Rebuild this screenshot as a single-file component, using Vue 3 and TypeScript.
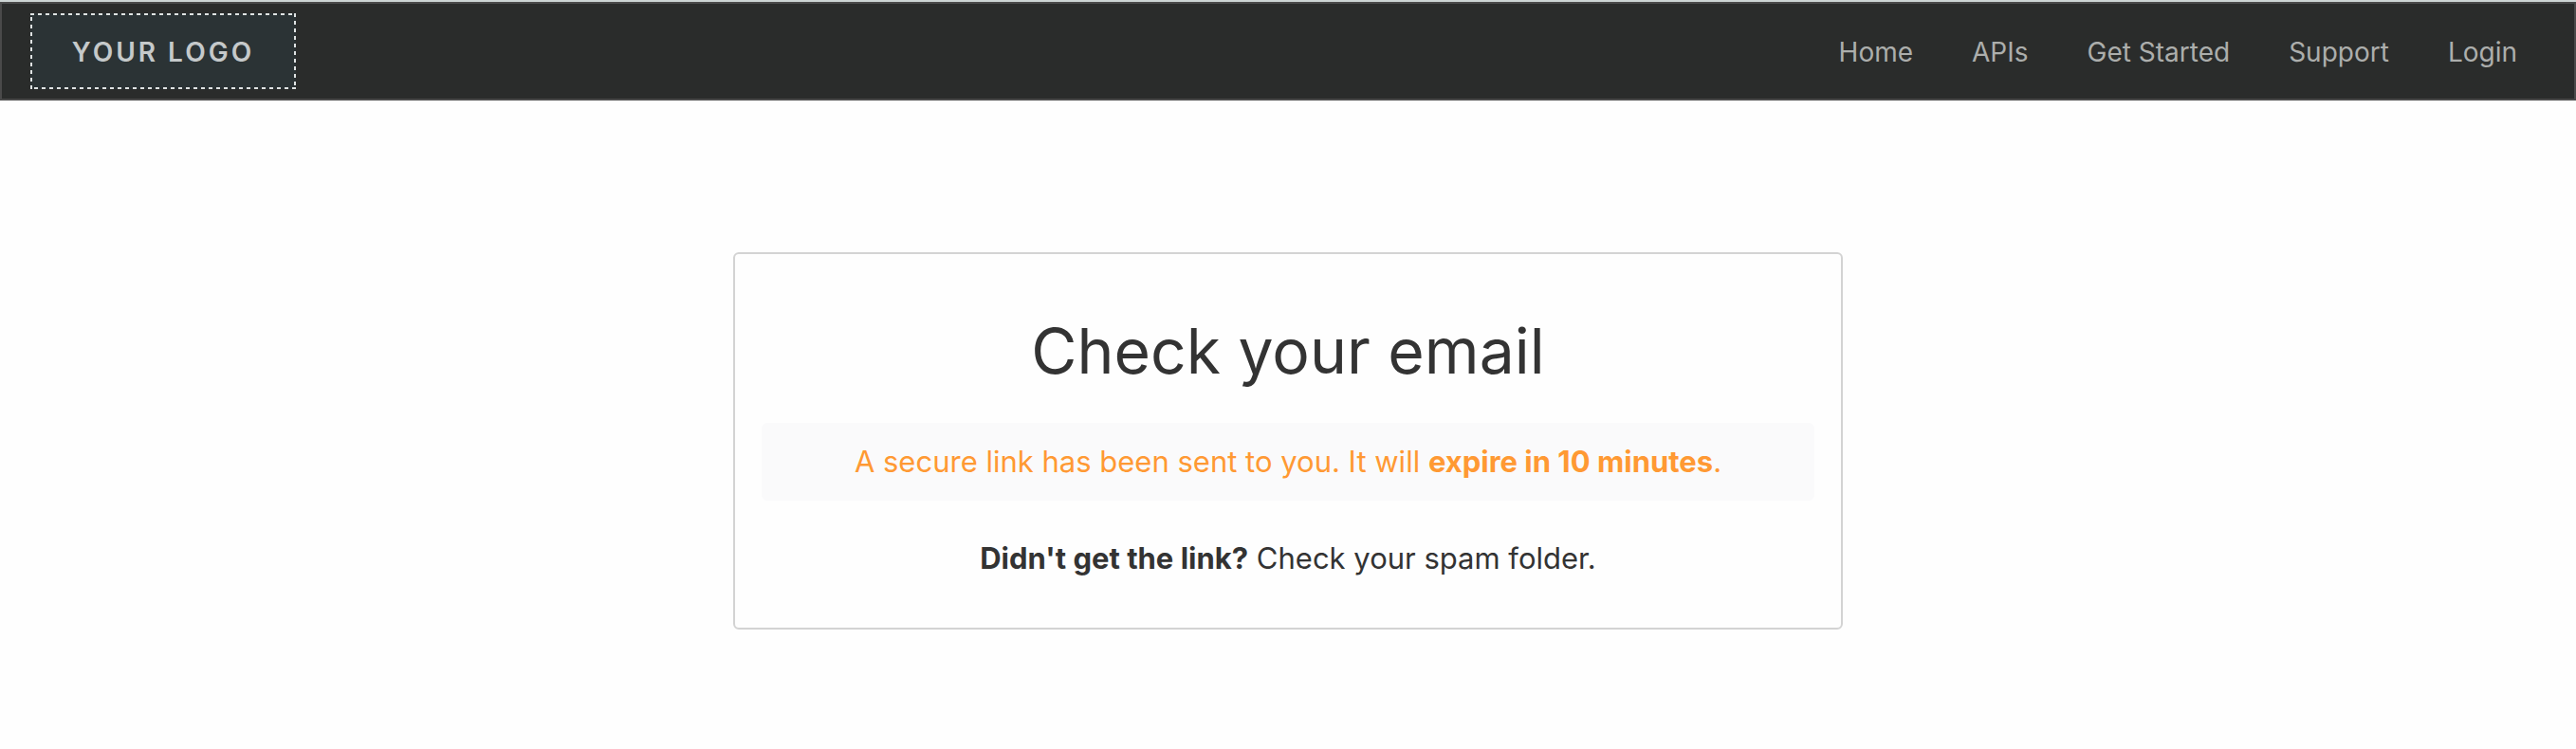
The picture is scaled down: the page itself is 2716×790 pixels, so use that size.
<script setup lang="ts">
interface NavLink {
  label: string
  href: string
}

const links: NavLink[] = [
  { label: 'Home', href: '#home' },
  { label: 'APIs', href: '#apis' },
  { label: 'Get Started', href: '#get-started' },
  { label: 'Support', href: '#support' },
  { label: 'Login', href: '#login' },
]
</script>

<template>
  <div class="page">
    <header class="topbar">
      <a class="logo" href="#home">
        <svg class="logo-frame" aria-hidden="true">
          <rect class="logo-outline" width="100%" height="100%" />
        </svg>
        <span class="logo-text">YOUR LOGO</span>
      </a>
      <nav class="nav" aria-label="Main">
        <a v-for="link in links" :key="link.label" class="nav-link" :href="link.href">{{ link.label }}</a>
      </nav>
    </header>

    <main class="content">
      <section class="card">
        <h1 class="title">Check your email</h1>
        <p class="notice">A secure link has been sent to you. It will <strong>expire in 10 minutes</strong>.</p>
        <p class="hint"><strong>Didn't get the link?</strong> Check your spam folder.</p>
      </section>
    </main>
  </div>
</template>

<style>
body {
  margin: 0;
  background: #fefefe;
}
</style>

<style scoped>
.page {
  font-family: Inter, "Liberation Sans", sans-serif;
  color: #333333;
  border-top: 2px solid #cdd5d4;
}

.topbar {
  display: flex;
  align-items: center;
  justify-content: space-between;
  flex-wrap: wrap;
  padding: 10px 60px 10px 30px;
  border: 2px solid #4a4a4a;
  background: #2a2c2b;
}

.logo {
  position: relative;
  display: flex;
  align-items: center;
  justify-content: center;
  width: 280px;
  height: 80px;
  background: #2b3335;
  color: #c5c9ca;
  text-decoration: none;
}

.logo-frame {
  position: absolute;
  inset: 0;
  width: 100%;
  height: 100%;
}

.logo-outline {
  fill: none;
  stroke: #dfe3e3;
  stroke-width: 4;
  stroke-dasharray: 4 4;
}

.logo-text {
  padding-top: 2px;
  font-size: 28px;
  line-height: 36px;
  font-weight: 600;
  letter-spacing: 3px;
}

.nav {
  display: flex;
  flex-wrap: wrap;
  gap: 62px;
  padding-top: 2px;
}

.nav-link {
  font-size: 28px;
  line-height: 36px;
  color: #acaeac;
  text-decoration: none;
}

.content {
  display: flex;
  justify-content: center;
  padding: 160px 32px 32px;
}

.card {
  box-sizing: border-box;
  width: 100%;
  max-width: 1170px;
  padding: 62px 28px 52px;
  border: 2px solid #d3d3d3;
  border-radius: 6px;
  text-align: center;
}

.title {
  margin: 0 0 36px;
  font-size: 66px;
  line-height: 80px;
  font-weight: 400;
}

.notice,
.hint {
  margin: 0;
  font-size: 31px;
  line-height: 42px;
}

.notice {
  margin-bottom: 40px;
  padding: 20px;
  border-radius: 6px;
  background: #fafafb;
  color: #ff9933;
}
</style>
